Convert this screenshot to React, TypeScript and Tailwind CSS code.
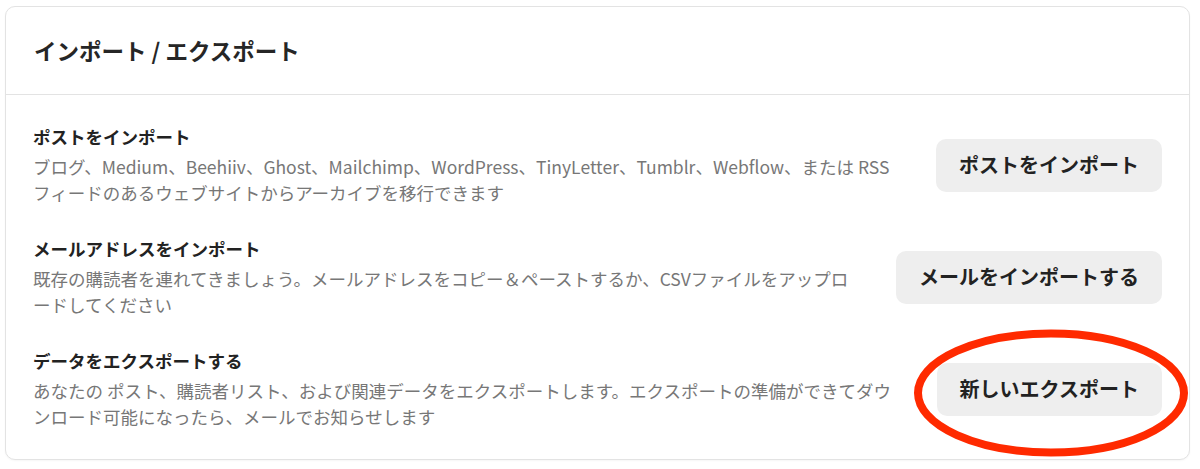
const rows = [
  {
    title: "ポストをインポート",
    text: "ブログ、Medium、Beehiiv、Ghost、Mailchimp、WordPress、TinyLetter、Tumblr、Webflow、または RSS フィードのあるウェブサイトからアーカイブを移行できます",
    button: "ポストをインポート",
  },
  {
    title: "メールアドレスをインポート",
    text: "既存の購読者を連れてきましょう。メールアドレスをコピー＆ペーストするか、CSVファイルをアップロードしてください",
    button: "メールをインポートする",
  },
  {
    title: "データをエクスポートする",
    text: "あなたの ポスト、購読者リスト、および関連データをエクスポートします。エクスポートの準備ができてダウンロード可能になったら、メールでお知らせします",
    button: "新しいエクスポート",
  },
];

export default function App() {
  return (
    <div
      className="relative w-[1200px] h-[469px] bg-white pt-[6px] pl-[5px] pr-[10px]"
      style={{ fontFamily: '"Noto Sans CJK JP", "Noto Sans", sans-serif' }}
    >
      <div className="rounded-[10px] border border-[#e3e3e3] bg-white shadow-[0_1px_2px_rgba(0,0,0,0.04)]">
        <div className="h-[88px] flex items-center px-[28px] border-b border-[#e3e3e3]">
          <h1 className="text-[22.5px] font-semibold text-[#262626]">インポート / エクスポート</h1>
        </div>
        <div className="flex flex-col gap-[30px] pt-[29px] pb-[29px] px-[27px]">
          {rows.map((row) => (
            <div key={row.title} className="flex items-center">
              <div className="flex-1 min-w-0">
                <div className="text-[17.5px] leading-[26px] font-semibold text-[#222] mb-[4px]">{row.title}</div>
                <p className="text-[17.5px] leading-[26px] text-[#777]">{row.text}</p>
              </div>
              <button className="ml-[36px] shrink-0 h-[53px] px-[23px] rounded-[10px] bg-[#eeeeee] text-[20px] font-semibold text-[#222] whitespace-nowrap">
                {row.button}
              </button>
            </div>
          ))}
        </div>
      </div>
      {/* red annotation ring round the export button */}
      <svg className="absolute left-[909px] top-[323px] pointer-events-none" width="284" height="140" viewBox="0 0 284 140">
        <ellipse cx="142" cy="70" rx="133" ry="59.5" fill="none" stroke="#ff2a00" strokeWidth="8" />
      </svg>
    </div>
  );
}
